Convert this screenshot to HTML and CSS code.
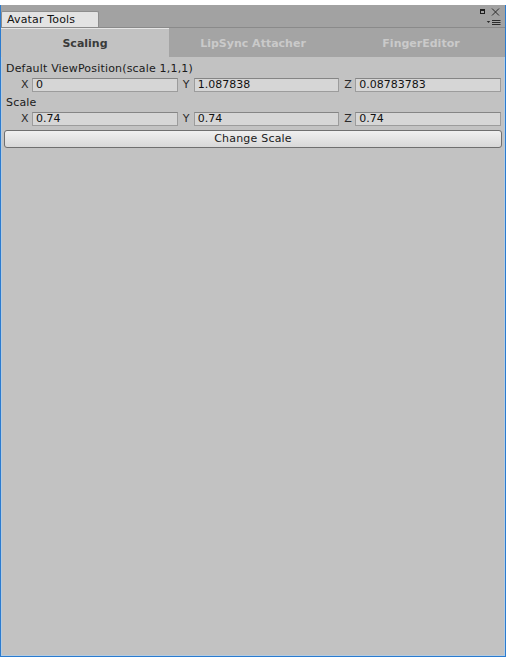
FILE: index.html
```html
<!DOCTYPE html>
<html>
<head>
<meta charset="utf-8">
<title>Avatar Tools</title>
<link rel="stylesheet" href="styles.css">
</head>
<body>
<div class="top-gap"></div>
<div class="window">
  <div class="dock">
    <div class="dock-tab">Avatar Tools</div>
    <svg class="dock-ctrls" width="24" height="22" viewBox="0 0 24 22">
      <rect x="3.5" y="4.5" width="4" height="4" fill="none" stroke="#1e1e1e"/>
      <rect x="3" y="4" width="5" height="2" fill="#1e1e1e"/>
      <path d="M15 3.5 L22 10.5 M22 3.5 L15 10.5" stroke="#2a2a2a" stroke-width="1" fill="none"/>
      <polygon points="9.8,16 13.2,16 11.5,18" fill="#2a2a2a"/>
      <path d="M15 15.5 H23.5 M15 17.5 H23.5 M15 19.5 H23.5" stroke="#2a2a2a" stroke-width="1" fill="none"/>
    </svg>
  </div>
  <div class="toolbar">
    <div class="tbtab active">Scaling</div>
    <div class="tbtab">LipSync Attacher</div>
    <div class="tbtab">FingerEditor</div>
  </div>
  <div class="content">
    <div class="label">Default ViewPosition(scale 1,1,1)</div>
    <div class="vec">
      <div class="comp"><span class="axis">X</span><span class="field">0</span></div>
      <div class="comp"><span class="axis">Y</span><span class="field">1.087838</span></div>
      <div class="comp"><span class="axis">Z</span><span class="field">0.08783783</span></div>
    </div>
    <div class="label">Scale</div>
    <div class="vec">
      <div class="comp"><span class="axis">X</span><span class="field">0.74</span></div>
      <div class="comp"><span class="axis">Y</span><span class="field">0.74</span></div>
      <div class="comp"><span class="axis">Z</span><span class="field">0.74</span></div>
    </div>
    <button class="btn" type="button">Change Scale</button>
  </div>
</div>
</body>
</html>
```

FILE: styles.css
```css
html, body {
  margin: 0;
  height: 100%;
}
body {
  background: #ffffff;
  font-family: "DejaVu Sans", Verdana, sans-serif;
  font-size: 11px;
  color: #1c1c1c;
  display: flex;
  flex-direction: column;
  overflow: hidden;
}
.top-gap {
  height: 5px;
  flex: none;
  background: #ffffff;
}
.window {
  flex: 1;
  display: flex;
  flex-direction: column;
  border: 1px solid #2b7bcf;
  border-top: none;
  background: #c2c2c2;
  box-shadow: inset 1px 0 #b4cbe0, inset -1px 0 #b4cbe0, inset 0 -1px #b4cbe0;
}
.dock {
  height: 22px;
  flex: none;
  display: flex;
  align-items: flex-end;
  background: #a2a2a2;
  border-bottom: 1px solid #8a8a8a;
}
.dock-tab {
  box-sizing: border-box;
  width: 98px;
  height: 16px;
  padding-left: 5px;
  line-height: 15px;
  letter-spacing: 0.15px;
  background: #e3e3e3;
  border: 1px solid #8d8d8d;
  border-bottom: none;
  border-radius: 2px 2px 0 0;
  color: #111111;
}
.dock-ctrls {
  margin-left: auto;
  margin-right: 4px;
  align-self: stretch;
  display: block;
}
.toolbar {
  height: 29px;
  flex: none;
  display: flex;
}
.tbtab {
  flex: 1;
  box-sizing: border-box;
  display: flex;
  align-items: center;
  justify-content: center;
  padding-top: 1px;
  font-weight: bold;
  color: #cacaca;
  background: #a4a4a4;
}
.tbtab.active {
  padding-top: 0;
  background: #c2c2c2;
  color: #3a3a3a;
  border-top: 1px solid #e6e6e6;
}
.content {
  flex: 1;
  display: flex;
  flex-direction: column;
  padding-top: 4px;
}
.label {
  height: 16px;
  line-height: 16px;
  padding-left: 5px;
  letter-spacing: 0.18px;
  color: #1a1a1a;
}
.vec {
  display: flex;
  gap: 3px;
  height: 14px;
  margin: 1px 4px 3px 18px;
}
.comp {
  flex: 1;
  display: flex;
  min-width: 0;
}
.axis {
  box-sizing: border-box;
  width: 13px;
  flex: none;
  padding-left: 2px;
  line-height: 14px;
  color: #2a2a2a;
}
.field {
  flex: 1;
  box-sizing: border-box;
  height: 14px;
  padding-left: 3px;
  line-height: 12px;
  background: #d6d6d6;
  border: 1px solid #9c9c9c;
  border-top-color: #858585;
  color: #111111;
  white-space: nowrap;
  overflow: hidden;
}
.btn {
  box-sizing: border-box;
  height: 18px;
  margin: 1px 3px 0 3px;
  padding: 0;
  font-family: inherit;
  font-size: 11px;
  line-height: 16px;
  letter-spacing: 0.2px;
  color: #1a1a1a;
  background: linear-gradient(#f0f0f0, #d8d8d8);
  border: 1px solid #6f6f6f;
  border-radius: 3px;
}
```
